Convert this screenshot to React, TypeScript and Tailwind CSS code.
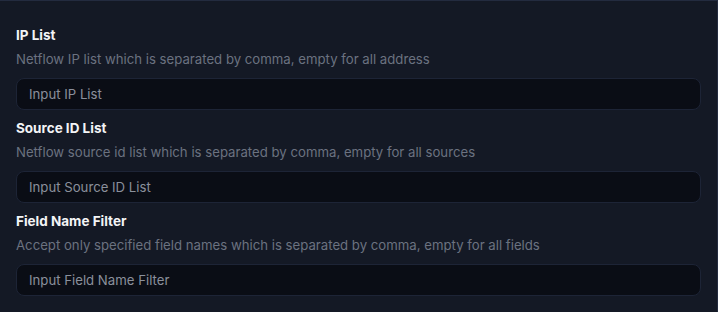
const fields = [
  {
    label: 'IP List',
    description: 'Netflow IP list which is separated by comma, empty for all address',
    placeholder: 'Input IP List'
  },
  {
    label: 'Source ID List',
    description: 'Netflow source id list which is separated by comma, empty for all sources',
    placeholder: 'Input Source ID List'
  },
  {
    label: 'Field Name Filter',
    description: 'Accept only specified field names which is separated by comma, empty for all fields',
    placeholder: 'Input Field Name Filter'
  }
];

const App = () => {
  return (
    <div
      className="h-[312px] w-[718px] overflow-hidden border-t border-r border-[#232b3f] bg-[#141925] px-4 pt-6"
      style={{ fontFamily: 'Inter, "Noto Sans", sans-serif' }}
    >
      <div className="flex flex-col gap-2">
        {fields.map((f) => (
          <div key={f.label} className="flex flex-col">
            <label className="text-[13.5px] leading-5 font-bold text-[#f3f4f6]">{f.label}</label>
            <p className="mt-1 text-[13.2px] leading-5 text-[#6b7280]">{f.description}</p>
            <input
              placeholder={f.placeholder}
              className="mt-[9px] h-8 w-full rounded-lg border border-[#1d2436] bg-[#0a0d15] px-3 text-[13.2px] text-[#e5e7eb] outline-none placeholder:text-[#8a909c]"
            />
          </div>
        ))}
      </div>
    </div>
  );
};

export default App;
